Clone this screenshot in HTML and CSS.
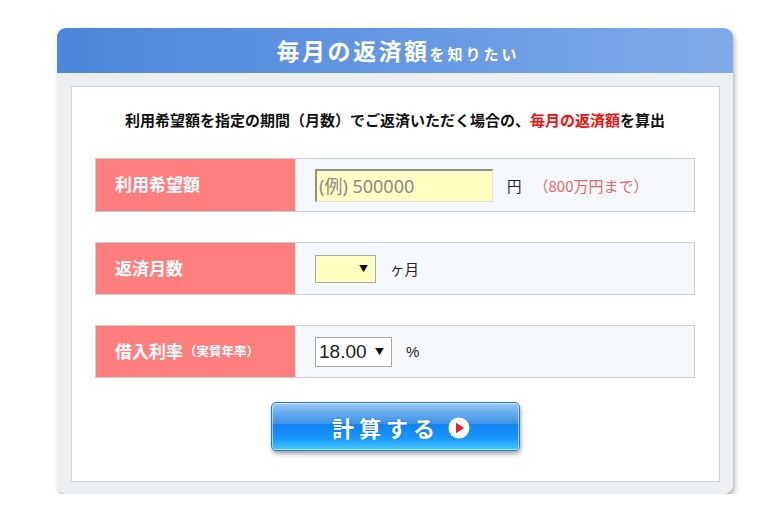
FILE: index.html
```html
<!DOCTYPE html>
<html lang="ja">
<head>
<meta charset="utf-8">
<title>毎月の返済額を知りたい</title>
<link rel="stylesheet" href="styles.css">
</head>
<body>
<div class="panel">
  <div class="panel-head">
    <span class="title-main">毎月の返済額</span><span class="title-sub">を知りたい</span>
  </div>
  <div class="panel-body">
    <div class="inner">
      <p class="intro">利用希望額を指定の期間（月数）でご返済いただく場合の、<span class="red">毎月の返済額</span>を算出</p>
      <div class="row row1">
        <div class="label">利用希望額</div>
        <div class="value">
          <input class="amount" type="text" placeholder="(例) 500000">
          <span class="unit">円</span>
          <span class="note">（800万円まで）</span>
        </div>
      </div>
      <div class="row row2">
        <div class="label">返済月数</div>
        <div class="value">
          <div class="select select-yellow"><span class="sel-text"></span><span class="arrow">▼</span></div>
          <span class="unit">ヶ月</span>
        </div>
      </div>
      <div class="row row3">
        <div class="label">借入利率<span class="label-small">（実質年率）</span></div>
        <div class="value">
          <div class="select select-white"><span class="sel-text">18.00</span><span class="arrow">▼</span></div>
          <span class="unit pct">%</span>
        </div>
      </div>
      <div class="btn-wrap">
        <button class="calc" type="button">
          <span class="calc-text">計算する</span>
          <svg class="play" width="22" height="22" viewBox="0 0 22 22"><circle cx="11" cy="11" r="10.5" fill="#fff"/><path d="M8 5.8 L16.2 11 L8 16.2 Z" fill="#e8202a"/></svg>
        </button>
      </div>
    </div>
  </div>
</div>
</body>
</html>
```

FILE: styles.css
```css
* { box-sizing: border-box; }
html, body { margin: 0; padding: 0; background: #fff; }
body {
  font-family: "Noto Sans CJK JP", "Noto Sans", sans-serif;
  color: #222;
}
.panel {
  margin: 28px 0 0 57px;
  width: 676px;
  border-radius: 9px;
  background: #ecf0f3;
  box-shadow: 2px 4px 5px rgba(0, 0, 0, 0.28);
}
.panel-head {
  height: 45px;
  border-radius: 9px 9px 0 0;
  background: linear-gradient(to right, #4c85db 0%, #6597e2 50%, #80aaea 100%);
  display: flex;
  align-items: center;
  justify-content: center;
  color: #fff;
  font-weight: bold;
  padding-left: 6px;
}
.title-main {
  font-size: 23px;
  letter-spacing: 2.5px;
  line-height: 1;
}
.title-sub {
  font-size: 15px;
  letter-spacing: 3px;
  line-height: 1;
  margin-top: 6px;
}
.panel-body {
  padding: 13px 13px 12px 14px;
}
.inner {
  background: #fff;
  border: 1px solid #cfd3d6;
  padding: 23px 24px 30px 23px;
}
.intro {
  margin: 0;
  text-align: center;
  font-size: 15px;
  font-weight: bold;
  line-height: 20px;
  color: #111;
}
.red { color: #f01010; }
.row {
  display: flex;
  height: 53px;
  border: 1px solid #cbcfd2;
  margin-top: 30px;
}
.row1 { margin-top: 28px; height: 54px; }
.label {
  width: 200px;
  background: #ff7f7f;
  color: #fff;
  font-weight: bold;
  font-size: 17px;
  display: flex;
  align-items: center;
  padding-left: 19px;
  padding-bottom: 3px;
  border-right: 1px solid #d9dcdf;
}
.label-small {
  font-size: 12.5px;
  margin-left: 1px;
}
.value {
  flex: 1;
  background: #f5f8fb;
  display: flex;
  align-items: center;
  padding-left: 19px;
}
.amount {
  width: 178px;
  height: 33px;
  background: #ffffc2;
  border-style: solid;
  border-width: 2px 1px 1px 2px;
  border-color: #8f8f8f #e0e0e0 #e0e0e0 #8f8f8f;
  font-family: "Noto Sans", "Noto Sans CJK JP", sans-serif;
  font-size: 18px;
  color: #333;
  padding: 0 2px;
  outline: none;
}
.amount::placeholder { color: #8a8a8a; }
.unit {
  font-size: 14.5px;
  color: #222;
  margin-left: 14px;
}
.note {
  font-size: 15px;
  color: #e06a6a;
  margin-left: 12px;
}
.select {
  height: 28px;
  border: 1px solid #a8a8a8;
  display: flex;
  align-items: center;
  justify-content: space-between;
  padding: 0 7px 0 3px;
}
.select-yellow {
  width: 61px;
  background: #ffffc2;
}
.select-white {
  width: 77px;
  height: 30px;
  background: #fff;
}
.sel-text {
  font-family: "Liberation Sans", "Noto Sans", sans-serif;
  font-size: 19px;
  color: #222;
}
.arrow {
  font-size: 9px;
  color: #111;
}
.row2 .unit { margin-left: 14px; }
.pct { margin-left: 14px; font-family: "Liberation Sans", sans-serif; font-size: 15px; }
.btn-wrap {
  display: flex;
  justify-content: center;
  margin-top: 24px;
}
.calc {
  width: 249px;
  height: 49px;
  border-radius: 5px;
  border: 1px solid #2a78d0;
  box-shadow: inset 0 0 0 1px rgba(255,255,255,0.55), 1px 3px 4px rgba(0,0,0,0.35);
  background: linear-gradient(to bottom, #9ccbf6 0%, #68adee 20%, #3e93e6 44%, #0f84f2 46%, #1a96fc 75%, #44cbff 100%);
  display: flex;
  align-items: center;
  justify-content: center;
  padding: 0 0 0 12px;
  cursor: pointer;
}
.calc-text {
  color: #fff;
  font-family: "Noto Sans CJK JP", sans-serif;
  font-weight: bold;
  font-size: 22px;
  letter-spacing: 5px;
  line-height: 1;
  text-shadow: 0 0 2px rgba(0, 60, 140, 0.4);
}
.play {
  margin-left: 8px;
  margin-top: 3px;
}
```
